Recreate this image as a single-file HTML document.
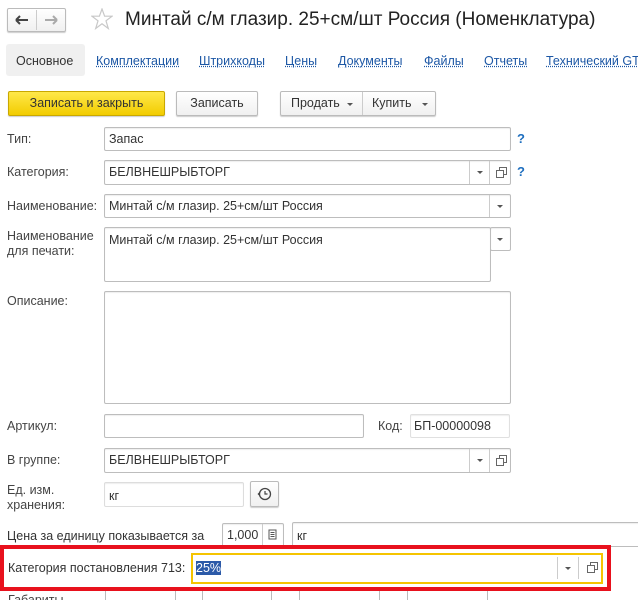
<!DOCTYPE html>
<html><head><meta charset="utf-8"><style>
body{margin:0;width:638px;height:600px;overflow:hidden;background:#fff;font-family:"Liberation Sans",Arial,sans-serif;font-size:12.5px;color:#333;position:relative}
.a{position:absolute}
.f{position:absolute;border:1px solid #bdbdbd;border-radius:2px;background:#fff;box-sizing:border-box;box-shadow:inset 0 1px 1px #eee}
.t{position:absolute;white-space:nowrap}
.lbl{position:absolute;color:#444;white-space:nowrap}
.btn{position:absolute;box-sizing:border-box;border:1px solid #bbb;border-radius:2px;background:linear-gradient(#fff,#f0f0f0);box-shadow:0 1px 1px #ccc;text-align:center;color:#333}
.dd{position:absolute;top:0;bottom:0;border-left:1px solid #ccc;width:20px}
.tri{position:absolute;width:0;height:0;border-left:3px solid transparent;border-right:3px solid transparent;border-top:3px solid #555}
.q{position:absolute;color:#1f6fbf;font-weight:bold;font-size:13px}
.link{position:absolute;color:#1c57a5;text-decoration:underline dotted;white-space:nowrap;top:54px}
.cp{position:absolute;width:6px;height:6px;border:1px solid #666;background:#fff}
</style></head><body>
<!-- nav buttons -->
<div class="btn" style="left:7px;top:8px;width:59px;height:24px;"></div>
<div class="a" style="left:36px;top:10px;width:1px;height:20px;background:#ccc"></div>
<svg class="a" style="left:14px;top:14px" width="16" height="12"><path d="M2 6H14M2 6L6 2M2 6L6 10" stroke="#444" stroke-width="2" fill="none"/></svg>
<svg class="a" style="left:43px;top:14px" width="16" height="12"><path d="M2 6H14M14 6L10 2M14 6L10 10" stroke="#aaa" stroke-width="2" fill="none"/></svg>
<svg class="a" style="left:91px;top:8px" width="22" height="22"><path d="M11 1L13.6 8.2H21L15 12.8L17.3 20.5L11 15.8L4.7 20.5L7 12.8L1 8.2H8.4Z" stroke="#c8c8c8" stroke-width="1.2" fill="none"/></svg>
<div class="t" style="left:125px;top:9px;font-size:19px;color:#222">Минтай с/м глазир. 25+см/шт Россия (Номенклатура)</div>
<!-- tabs -->
<div class="a" style="left:6px;top:44px;width:79px;height:32px;background:#f0f0f0;border-radius:3px"></div>
<div class="t" style="left:16px;top:54px;color:#333">Основное</div>
<div class="link" style="left:96px">Комплектации</div>
<div class="link" style="left:199px">Штрихкоды</div>
<div class="link" style="left:285px">Цены</div>
<div class="link" style="left:338px">Документы</div>
<div class="link" style="left:424px">Файлы</div>
<div class="link" style="left:484px">Отчеты</div>
<div class="link" style="left:546px">Технический GTIN</div>
<!-- buttons -->
<div class="btn" style="left:8px;top:91px;width:157px;height:25px;background:linear-gradient(#ffe84a,#f2cc00);border-color:#c9a800;line-height:23px;color:#333">Записать и закрыть</div>
<div class="btn" style="left:176px;top:91px;width:82px;height:25px;line-height:23px">Записать</div>
<div class="btn" style="left:280px;top:91px;width:156px;height:25px"></div>
<div class="a" style="left:362px;top:92px;width:1px;height:23px;background:#ccc"></div>
<div class="t" style="left:291px;top:96px">Продать</div><div class="tri" style="left:347px;top:103px"></div>
<div class="t" style="left:372px;top:96px">Купить</div><div class="tri" style="left:422px;top:103px"></div>
<!-- Тип -->
<div class="lbl" style="left:7px;top:132px">Тип:</div>
<div class="f" style="left:104px;top:127px;width:407px;height:24px"></div>
<div class="t" style="left:109px;top:132px">Запас</div>
<div class="q" style="left:517px;top:131px">?</div>
<!-- Категория -->
<div class="lbl" style="left:7px;top:165px">Категория:</div>
<div class="f" style="left:104px;top:160px;width:407px;height:25px"><div class="dd" style="right:20px"></div><div class="dd" style="right:0"></div></div>
<div class="tri" style="left:477px;top:171px"></div>
<div class="cp" style="left:499px;top:167px"></div><div class="cp" style="left:496px;top:170px"></div>
<div class="t" style="left:109px;top:165px">БЕЛВНЕШРЫБТОРГ</div>
<div class="q" style="left:517px;top:164px">?</div>
<!-- Наименование -->
<div class="lbl" style="left:7px;top:199px">Наименование:</div>
<div class="f" style="left:104px;top:194px;width:407px;height:24px"><div class="dd" style="right:0"></div></div>
<div class="tri" style="left:497px;top:205px"></div>
<div class="t" style="left:109px;top:199px">Минтай с/м глазир. 25+см/шт Россия</div>
<!-- для печати -->
<div class="lbl" style="left:7px;top:229px;line-height:15px">Наименование<br>для печати:</div>
<div class="f" style="left:104px;top:227px;width:387px;height:55px"></div>
<div class="f" style="left:490px;top:227px;width:21px;height:24px"></div>
<div class="tri" style="left:497px;top:238px"></div>
<div class="t" style="left:109px;top:233px">Минтай с/м глазир. 25+см/шт Россия</div>
<!-- Описание -->
<div class="lbl" style="left:7px;top:294px">Описание:</div>
<div class="f" style="left:104px;top:291px;width:407px;height:113px"></div>
<!-- Артикул -->
<div class="lbl" style="left:7px;top:419px">Артикул:</div>
<div class="f" style="left:104px;top:414px;width:260px;height:24px"></div>
<div class="lbl" style="left:378px;top:419px">Код:</div>
<div class="f" style="left:410px;top:414px;width:100px;height:24px;border-color:#e0e0e0"></div>
<div class="t" style="left:414px;top:419px">БП-00000098</div>
<!-- В группе -->
<div class="lbl" style="left:7px;top:453px">В группе:</div>
<div class="f" style="left:104px;top:448px;width:407px;height:25px"><div class="dd" style="right:20px"></div><div class="dd" style="right:0"></div></div>
<div class="tri" style="left:477px;top:459px"></div>
<div class="cp" style="left:499px;top:455px"></div><div class="cp" style="left:496px;top:458px"></div>
<div class="t" style="left:109px;top:453px">БЕЛВНЕШРЫБТОРГ</div>
<!-- Ед изм -->
<div class="lbl" style="left:7px;top:483px;line-height:15px">Ед. изм.<br>хранения:</div>
<div class="f" style="left:104px;top:482px;width:140px;height:25px;border-color:#ddd"></div>
<div class="t" style="left:109px;top:489px">кг</div>
<div class="btn" style="left:250px;top:481px;width:29px;height:26px"></div>
<svg class="a" style="left:256px;top:486px" width="16" height="16"><circle cx="9" cy="8" r="5.5" stroke="#444" stroke-width="1.3" fill="none"/><path d="M9 5V8H11.5" stroke="#444" stroke-width="1.2" fill="none"/><path d="M1.5 8L3.5 6L3.5 10Z" fill="#444"/></svg>
<!-- Цена -->
<div class="lbl" style="left:7px;top:529px;color:#333">Цена за единицу показывается за</div>
<div class="f" style="left:222px;top:523px;width:62px;height:24px"><div class="dd" style="right:0"></div></div>
<svg class="a" style="left:268px;top:529px" width="10" height="12"><rect x="1" y="1" width="7" height="9" stroke="#555" fill="none"/><path d="M2.5 3.5H6.5M2.5 5.5H6.5M2.5 7.5H6.5" stroke="#555"/></svg>
<div class="t" style="left:227px;top:528px">1,000</div>
<div class="f" style="left:292px;top:522px;width:350px;height:25px"></div>
<div class="t" style="left:297px;top:529px">кг</div>
<!-- red box -->
<div class="a" style="left:0;top:545px;width:611px;height:46px;box-sizing:border-box;border:4px solid #e8111d"></div>
<div class="a" style="left:191px;top:553px;width:412px;height:31px;box-sizing:border-box;border:2px solid #f5c400;background:#fff"></div>
<div class="a" style="left:557px;top:557px;width:1px;height:22px;background:#ccc"></div>
<div class="a" style="left:578px;top:557px;width:1px;height:22px;background:#ccc"></div>
<div class="tri" style="left:565px;top:567px"></div>
<div class="cp" style="left:590px;top:562px"></div><div class="cp" style="left:587px;top:565px"></div>
<div class="lbl" style="left:8px;top:561px;color:#333">Категория постановления 713:</div>
<div class="t" style="left:196px;top:561px;background:#2c5aa8;color:#fff">25%</div>
<!-- bottom row -->
<div class="a" style="left:0;top:591px;width:638px;height:9px;overflow:hidden">
<div class="t" style="left:8px;top:2px;color:#444">Габариты</div>
<div class="a" style="left:105px;top:0;width:1px;height:9px;background:#bbb"></div>
<div class="a" style="left:175px;top:0;width:1px;height:9px;background:#bbb"></div>
<div class="a" style="left:202px;top:0;width:1px;height:9px;background:#bbb"></div>
<div class="a" style="left:271px;top:0;width:1px;height:9px;background:#bbb"></div>
<div class="a" style="left:299px;top:0;width:1px;height:9px;background:#bbb"></div>
<div class="a" style="left:379px;top:0;width:1px;height:9px;background:#bbb"></div>
<div class="a" style="left:407px;top:0;width:1px;height:9px;background:#bbb"></div>
<div class="a" style="left:487px;top:0;width:1px;height:9px;background:#bbb"></div>
</div>
</body></html>
